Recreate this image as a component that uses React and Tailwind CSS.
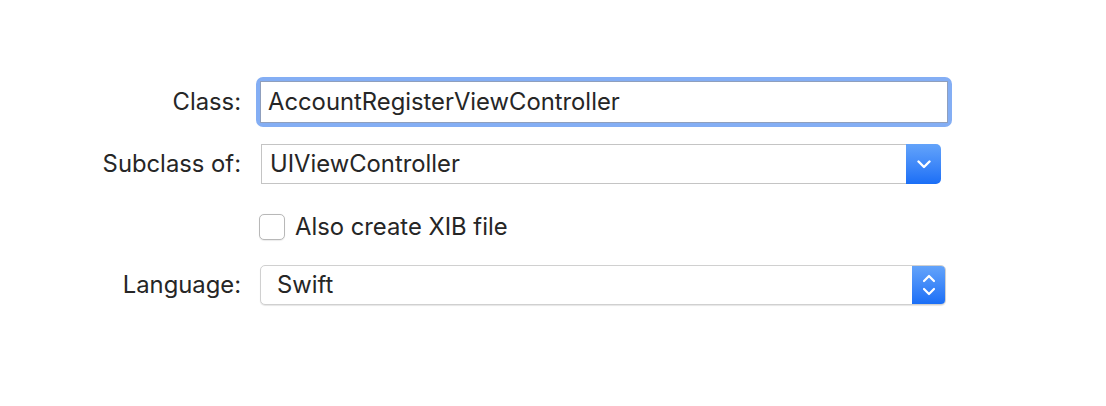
export default function App() {
  const font = { fontFamily: 'Inter, "Helvetica Neue", "Liberation Sans", sans-serif' };
  return (
    <div className="w-[1106px] h-[406px] bg-white text-[#262626]" style={font}>
      <div className="flex flex-col pt-[77px]">
        {/* Class row */}
        <div className="flex items-center h-[50px]">
          <div className="w-[242px] text-right text-[23.8px] leading-none pr-[1px]">Class:</div>
          <div className="ml-[14px] w-[696px] h-[50px] rounded-[7px] bg-[#84aef4] p-[4px]">
            <div className="w-full h-full border border-[#8f9fbd] bg-white flex items-center pl-[7px] text-[23.8px] leading-none">
              AccountRegisterViewController
            </div>
          </div>
        </div>
        {/* Subclass row */}
        <div className="flex items-center h-[40px] mt-[17px]">
          <div className="w-[242px] text-right text-[23.8px] leading-none pr-[1px]">Subclass of:</div>
          <div className="ml-[19px] w-[680px] h-[40px] flex">
            <div className="flex-1 border border-[#c4c4c4] border-r-0 bg-white flex items-center pl-[8px] text-[23.8px] leading-none">
              UIViewController
            </div>
            <div className="w-[35px] h-full rounded-r-[5px] bg-gradient-to-b from-[#63a3fa] to-[#1a6ef6] flex items-center justify-center">
              <svg width="14" height="9" viewBox="0 0 14 9" fill="none">
                <path d="M1.5 1.5 L7 7 L12.5 1.5" stroke="white" strokeWidth="2.4" strokeLinecap="round" strokeLinejoin="round" />
              </svg>
            </div>
          </div>
        </div>
        {/* Checkbox row */}
        <div className="flex items-center h-[27px] mt-[29px]">
          <div className="w-[242px]" />
          <div className="ml-[17px] w-[26px] h-[26px] rounded-[5px] border border-[#b8b8b8] bg-white shadow-[0_0.5px_1px_rgba(0,0,0,0.08)]" />
          <div className="ml-[10px] text-[23.8px] leading-none">Also create XIB file</div>
        </div>
        {/* Language row */}
        <div className="flex items-center h-[40px] mt-[25px]">
          <div className="w-[242px] text-right text-[23.8px] leading-none pr-[1px]">Language:</div>
          <div className="ml-[18px] w-[686px] h-[40px] flex rounded-[5px] border border-[#d0d0d0] bg-white shadow-[0_1px_1px_rgba(0,0,0,0.1)] overflow-hidden">
            <div className="flex-1 flex items-center pl-[16px] text-[23.8px] leading-none">Swift</div>
            <div className="w-[33px] h-full bg-gradient-to-b from-[#63a3fa] to-[#1a6ef6] flex items-center justify-center">
              <svg width="14" height="24" viewBox="0 0 14 24" fill="none">
                <path d="M2 8 L7 3 L12 8" stroke="white" strokeWidth="2.2" strokeLinecap="round" strokeLinejoin="round" />
                <path d="M2 16 L7 21 L12 16" stroke="white" strokeWidth="2.2" strokeLinecap="round" strokeLinejoin="round" />
              </svg>
            </div>
          </div>
        </div>
      </div>
    </div>
  );
}
